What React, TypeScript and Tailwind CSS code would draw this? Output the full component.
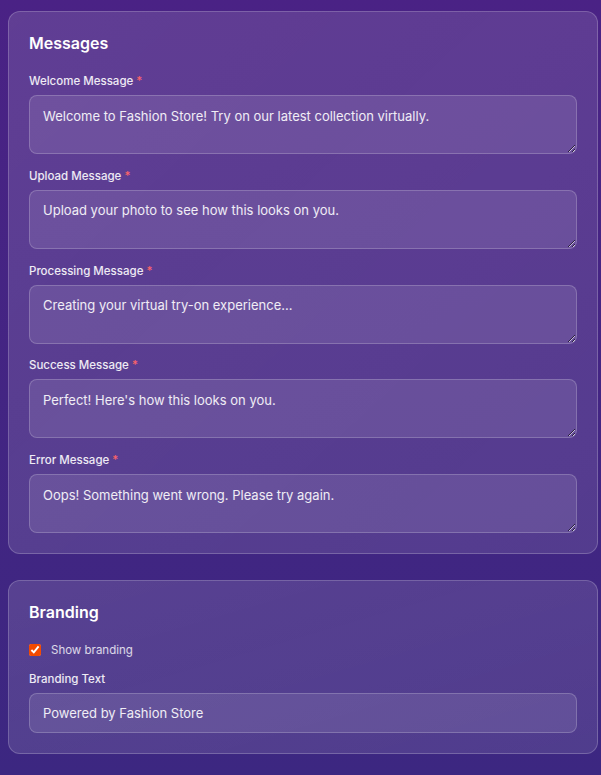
import { useState } from "react";

type Field = { id: string; label: string; value: string };

const messageFields: Field[] = [
  { id: "welcome", label: "Welcome Message", value: "Welcome to Fashion Store! Try on our latest collection virtually." },
  { id: "upload", label: "Upload Message", value: "Upload your photo to see how this looks on you." },
  { id: "processing", label: "Processing Message", value: "Creating your virtual try-on experience..." },
  { id: "success", label: "Success Message", value: "Perfect! Here's how this looks on you." },
  { id: "error", label: "Error Message", value: "Oops! Something went wrong. Please try again." },
];

function Card({ title, children }: { title: string; children: React.ReactNode }) {
  return (
    <section className="rounded-xl border border-white/20 bg-white/10 bg-gradient-to-br from-white/[0.03] to-transparent p-5">
      <h2 className="mb-[19px] text-base leading-[22px] font-semibold text-white">{title}</h2>
      {children}
    </section>
  );
}

export default function App() {
  const [messages, setMessages] = useState<Record<string, string>>(
    Object.fromEntries(messageFields.map((f) => [f.id, f.value]))
  );
  const [showBranding, setShowBranding] = useState(true);
  const [brandingText, setBrandingText] = useState("Powered by Fashion Store");

  return (
    <div
      className="min-h-screen bg-gradient-to-b from-[#4a2285] to-[#3c2781] pt-[11px] pb-[22px] pl-[8px] pr-[3px]"
      style={{ fontFamily: "Inter, 'Noto Sans', sans-serif" }}
    >
      <div className="flex flex-col gap-[26px]">
        {/* Messages */}
        <Card title="Messages">
          <div className="flex flex-col gap-[13.75px]">
            {messageFields.map((f) => (
              <div key={f.id}>
                <label htmlFor={f.id} className="mb-1.5 block text-[11.5px] leading-4 font-medium text-white/90">
                  {f.label} <span className="text-red-400">*</span>
                </label>
                <textarea
                  id={f.id}
                  value={messages[f.id]}
                  onChange={(e) => setMessages({ ...messages, [f.id]: e.target.value })}
                  className="block h-[59px] w-full rounded-lg border border-white/20 bg-white/10 px-[13px] pt-[9.5px] text-[13px] leading-5 text-white/90 outline-none"
                />
              </div>
            ))}
          </div>
        </Card>

        {/* Branding */}
        <Card title="Branding">
          <div className="flex flex-col gap-[13px]">
            <label className="flex h-4 items-center gap-2.5 text-[11.5px] leading-4 text-white/80">
              <input
                type="checkbox"
                checked={showBranding}
                onChange={(e) => setShowBranding(e.target.checked)}
                className="m-0 h-[12px] w-[12px] accent-orange-600"
              />
              Show branding
            </label>
            <div>
              <label htmlFor="brandingText" className="mb-1.5 block text-[11.5px] leading-4 font-medium text-white/90">
                Branding Text
              </label>
              <input
                id="brandingText"
                value={brandingText}
                onChange={(e) => setBrandingText(e.target.value)}
                className="block h-[40px] w-full rounded-lg border border-white/20 bg-white/10 px-[13px] text-[13px] text-white/90 outline-none"
              />
            </div>
          </div>
        </Card>
      </div>
    </div>
  );
}
